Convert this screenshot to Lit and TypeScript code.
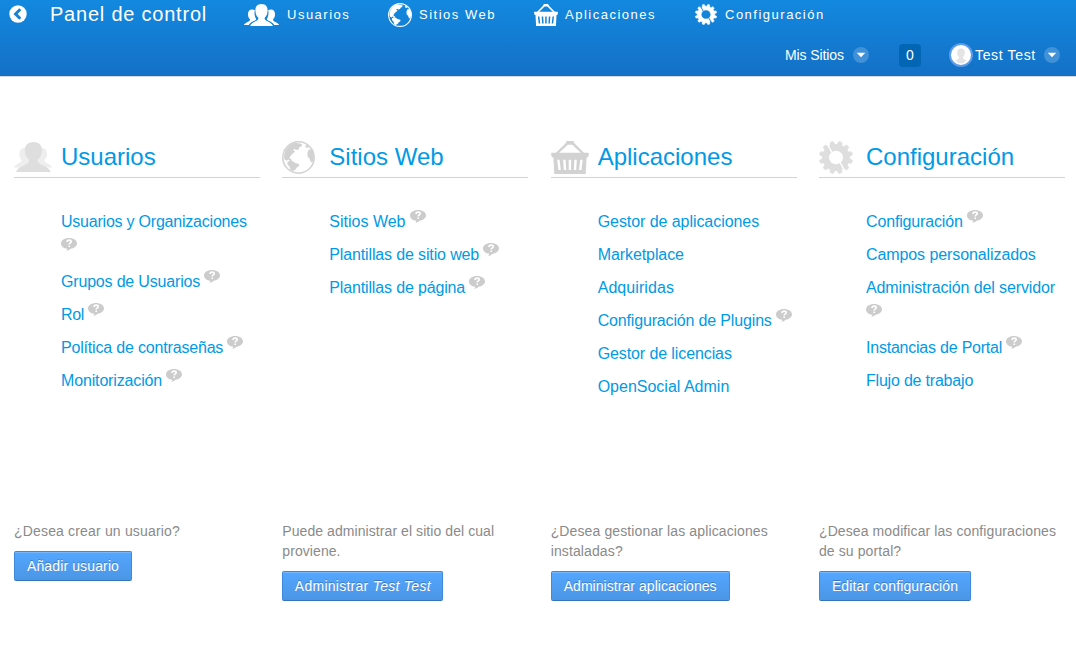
import { LitElement, html, svg, css, nothing } from "lit";
import { customElement, property } from "lit/decorators.js";
import { classMap } from "lit/directives/class-map.js";

type IconName = "users" | "globe" | "basket" | "gear";

function gearPath(cx: number, cy: number, outer: number, inner: number, teeth: number): string {
  const pts: string[] = [];
  const step = (Math.PI * 2) / teeth;
  for (let i = 0; i < teeth; i++) {
    const a = (i + 0.5) * step - Math.PI / 2;
    for (const [f, r] of [[-0.34, inner], [-0.17, outer], [0.17, outer], [0.34, inner]]) {
      pts.push(`${(cx + Math.cos(a + step * f) * r).toFixed(2)} ${(cy + Math.sin(a + step * f) * r).toFixed(2)}`);
    }
  }
  return `M${pts.join("L")}Z`;
}

const GEAR = gearPath(16.5, 16.5, 16.1, 13, 12);

@customElement("panel-icon")
class PanelIcon extends LitElement {
  @property() name: IconName = "users";
  @property({ type: Boolean }) solid = false;

  static styles = css`
    :host { display: block; }
    svg { display: block; width: 100%; height: 100%; }
  `;

  private shape() {
    switch (this.name) {
      case "users":
        return this.solid
          ? svg`<g fill="currentColor">
              <path d="M8.200 5.600C5.300 5.600 4 7.500 4 10.200c0 2.300.7 3.800 1.900 5 .3 1.300-.6 2-2.300 2.900C1.500 19.200.5 19.800 0 21h4.700c1.300-2.300 4-3.300 6.300-4.400.8-.5 1.200-1 1.200-1.600-1.100-1.500-1.600-3.800-1.700-6.200 0-1 .1-1.800.4-2.600-.7-.4-1.600-.6-2.700-.6Z"/>
              <path d="M26.800 5.600c2.900 0 4.200 1.900 4.200 4.600 0 2.300-.7 3.800-1.900 5-.3 1.300.6 2 2.300 2.900 2.100 1.100 3.100 1.700 3.600 2.900h-4.700c-1.300-2.300-4-3.300-6.300-4.400-.8-.5-1.200-1-1.200-1.600 1.100-1.500 1.600-3.800 1.700-6.200 0-1-.1-1.800-.4-2.600.7-.4 1.600-.6 2.700-.6Z"/>
              <path d="M17.500 0c-4.400 0-6.200 2.900-6.100 6.700.1 3.200 1.200 5.500 2.900 7 .3 1.600-.5 2.500-2.300 3.300C9.300 18.200 7.300 19.300 6 22h23c-1.300-2.700-3.300-3.800-6-5-1.800-.8-2.600-1.700-2.300-3.300 1.700-1.500 2.800-3.800 2.900-7C23.700 2.900 21.900 0 17.500 0Z"/>
            </g>`
          : svg`<g fill="currentColor">
              <path opacity=".5" d="M10.500 6C7 6 5.200 8.600 5.300 12c.1 2.800 1 4.300 2.200 5.500.3 1.800-1.700 3-3.700 4C2 22.500.8 23.200 0 25h37.500c-.8-1.800-2-2.500-3.800-3.500-2-1-4-2.200-3.700-4 1.200-1.200 2.500-2.700 2.600-5.500C32.700 8.600 31 6 27.500 6Z"/>
              <path d="M19.200 0c-6 0-8.700 3.600-8.500 8.500.1 4 1.800 7 4.200 8.800.4 2.300-.6 3.500-3 4.700C7 24.500 4 25.500 2 29.500h34.300c-2-4-5-5-9.900-7.500-2.400-1.200-3.400-2.400-3-4.700 2.400-1.800 4.100-4.800 4.200-8.800C27.800 3.600 25.200 0 19.200 0Z"/>
            </g>`;
      case "globe":
        return svg`
          <circle cx="12" cy="12" r="11.400" fill="none" stroke="currentColor" stroke-width="1.100"/>
          <path fill="currentColor" d="M1.500 12C1.500 7.500 4 3.600 7.600 1.800L9.500 1.200l2 .5 2 .1 1.200.9-.6 1.300-1.300.4-.8 1.700-1.700.4-1.200-.7-.9.8 1.400 1.200-1.800 1.300-2 2.200-.2 1.500 1.400.7.2 1.300-1.400-.3-1.200-1L3.300 14.400 1.900 13.500Z"/>
          <path fill="currentColor" d="M3.900 15.200l1.500-.7 2.600.3 1.300 1.100 3 .9.2 1.200-1.900 1.400-1 1.600-2 1L6.200 21.200l-.6-2.400-1.500-1.500Z"/>
          <path fill="currentColor" d="M18.500 8.200l1-2h2.400c.9 1.600 1.400 3.500 1.400 5.600l-.9 3.300-1.400.5-.8-2.500-1.600-1.800Z"/>
          <path fill="currentColor" d="M16.800 3.200l1.300-.2 1.600 1.200-.8.8-1.700-.5Z"/>`;
      case "basket":
        return svg`
          <path fill="none" stroke="currentColor" stroke-width="1.500" stroke-linejoin="round" d="M3.500 8.500L10 1.900 10.500 1h3l.5.9 6.500 6.600"/>
          <path fill="currentColor" d="M10 0h4l.9 1.500-.9 1h-4l-.9-1Z"/>
          <path fill="currentColor" fill-rule="evenodd" d="M.4 7.800h23.200l.4.500-.5 2.400-1 .3-.6 11H2.100l-.6-11-1-.3L0 8.300ZM3.900 12.500l.8 6.900h1.500l-.8-6.900ZM7.700 12.500l.4 6.900h1.500l-.4-6.900ZM11.200 12.500v6.900h1.500v-6.900ZM14.800 12.500l-.4 6.900h1.500l.4-6.900ZM18.500 12.500l-.8 6.900h1.500l.8-6.900Z"/>`;
      case "gear":
        return svg`
          <mask id="cut"><rect width="33" height="33" fill="#fff"/><circle cx="16.500" cy="16.500" r="6.800" fill="#000"/>
            <path stroke="#000" stroke-width="1.500" d="M12.500 11.500L7.800 2.500M20.500 21.500l4.700 9"/></mask>
          <path fill="currentColor" mask="url(#cut)" stroke="currentColor" stroke-width=".9" stroke-linejoin="round" d=${GEAR} />`;
    }
  }

  render() {
    const boxes: Record<IconName, string> = {
      users: this.solid ? "0 0 35 22" : "0 0 37.500 29.500",
      globe: "0 0 24 24",
      basket: "0 0 24 22",
      gear: "0 0 33 33",
    };
    return html`<svg viewBox=${boxes[this.name]} preserveAspectRatio="none" aria-hidden="true">${this.shape()}</svg>`;
  }
}

/* track is the letter spacing of a text, in pixels */
interface Entry { text: string; track: number; help?: boolean; wrap?: boolean }
interface Section {
  icon: IconName; title: string; entries: Entry[];
  hint: string[]; hintTrack: number;
  action: unknown; actionTrack: number; width: number;
}

const NAV: { icon: IconName; text: string }[] = [
  { icon: "users", text: "Usuarios" },
  { icon: "globe", text: "Sitios Web" },
  { icon: "basket", text: "Aplicaciones" },
  { icon: "gear", text: "Configuración" },
];

const SECTIONS: Section[] = [
  {
    icon: "users", title: "Usuarios", width: 118,
    entries: [
      { text: "Usuarios y Organizaciones", track: -0.22, help: true, wrap: true },
      { text: "Grupos de Usuarios", track: -0.18, help: true },
      { text: "Rol", track: -0.33, help: true },
      { text: "Política de contraseñas", track: -0.18, help: true },
      { text: "Monitorización", track: -0.15, help: true },
    ],
    hint: ["¿Desea crear un usuario?"], hintTrack: 0.17,
    action: "Añadir usuario", actionTrack: 0.13,
  },
  {
    icon: "globe", title: "Sitios Web", width: 161,
    entries: [
      { text: "Sitios Web", track: 0, help: true },
      { text: "Plantillas de sitio web", track: -0.14, help: true },
      { text: "Plantillas de página", track: -0.15, help: true },
    ],
    hint: ["Puede administrar el sitio del cual", "proviene."], hintTrack: 0.07,
    action: html`Administrar <em>Test Test</em>`, actionTrack: 0.26,
  },
  {
    icon: "basket", title: "Aplicaciones", width: 179,
    entries: [
      { text: "Gestor de aplicaciones", track: -0.06 },
      { text: "Marketplace", track: -0.08 },
      { text: "Adquiridas", track: 0.07 },
      { text: "Configuración de Plugins", track: -0.16, help: true },
      { text: "Gestor de licencias", track: -0.1 },
      { text: "OpenSocial Admin", track: 0 },
    ],
    hint: ["¿Desea gestionar las aplicaciones", "instaladas?"], hintTrack: 0.12,
    action: "Administrar aplicaciones", actionTrack: 0.05,
  },
  {
    icon: "gear", title: "Configuración", width: 152,
    entries: [
      { text: "Configuración", track: -0.15, help: true },
      { text: "Campos personalizados", track: -0.09 },
      { text: "Administración del servidor", track: -0.11, help: true, wrap: true },
      { text: "Instancias de Portal", track: -0.22, help: true },
      { text: "Flujo de trabajo", track: -0.2 },
    ],
    hint: ["¿Desea modificar las configuraciones", "de su portal?"], hintTrack: 0.1,
    action: "Editar configuración", actionTrack: 0.12,
  },
];

@customElement("app-root")
class AppRoot extends LitElement {
  static styles = css`
    :host { display: block; height: 662px; overflow: hidden; background: #fff; font-family: "Liberation Sans", Arial, sans-serif; }
    * { box-sizing: border-box; }
    .bar { height: 77px; background: linear-gradient(#1289df, #1470c6); border-bottom: 1px solid #d5d9dd; color: #fff; }
    .top { display: grid; grid-template-columns: 41px 194px 144px 146px 161px auto; height: 29px; padding-left: 9px; align-items: center; }
    .back { display: block; width: 18px; height: 18px; margin-bottom: 1px; }
    .title { margin: 0 0 1px; font-size: 20px; font-weight: 400; letter-spacing: .78px; line-height: 28px; white-space: nowrap; }
    .nav { display: flex; align-items: center; font-size: 13px; letter-spacing: 1.500px; line-height: 28px; white-space: nowrap; }
    .nav .users { width: 35px; height: 22px; margin-right: 8px; }
    .nav .globe { width: 24px; height: 24px; margin-right: 7px; }
    .nav .basket { width: 24px; height: 22px; margin-right: 7px; }
    .nav .gear { width: 22px; height: 21px; margin-right: 8px; }
    .dock { display: grid; grid-template-columns: 68px 46px 50px 26px 69px 16px; margin: 14px 0 0 785px; height: 24px; align-items: center; font-size: 14px; white-space: nowrap; }
    .sites { letter-spacing: -.1px; }
    .person { letter-spacing: .65px; }
    .caret { display: block; width: 16px; height: 16px; }
    .count { width: 22px; height: 23px; line-height: 23px; border-radius: 4px; background: #0366b5; text-align: center; }
    .avatar { display: block; width: 24px; height: 24px; }
    .grid { display: grid; grid-template-columns: repeat(4, 246px); column-gap: 22.340px; padding: 61px 0 0 14px; }
    .head { display: flex; align-items: flex-end; height: 40px; border-bottom: 1px solid #d3d3d3; }
    .mark { width: 47px; height: 39px; display: flex; align-items: flex-end; color: #d2d2d2; }
    .mark .users { width: 38px; height: 30px; margin-bottom: 5px; color: #dedede; }
    .mark .globe { width: 33px; height: 33px; margin-bottom: 3px; }
    .mark .basket { width: 38px; height: 33px; margin-bottom: 3px; }
    .mark .gear { width: 34px; height: 33px; margin-bottom: 3px; color: #dedede; }
    .head h2 { margin: 0; font-size: 24px; font-weight: 400; line-height: 40px; color: #009ae5; white-space: nowrap; }
    .list { list-style: none; margin: 0; padding: 27px 0 0 47px; height: 343px; color: #009ae5; font-size: 16px; line-height: 33px; white-space: nowrap; }
    .row { display: flex; align-items: flex-start; height: 33px; }
    .row.wrap { display: block; height: 60px; }
    .help { display: block; width: 16px; height: 13px; margin: 5px 0 0 4px; flex: none; }
    .wrap .help { margin: 0; }
    .hint { margin: 0; color: #8a8a8a; font-size: 14px; line-height: 20px; white-space: nowrap; }
    .line { display: block; }
    .button { display: block; margin: 10px 0 0; padding: 0; height: 30px; font: 14px "Liberation Sans", Arial, sans-serif; color: #fff; text-shadow: 0 -1px 0 rgba(0, 0, 0, .25); white-space: nowrap; background: linear-gradient(#54a6ff, #4b96e6); border: 1px solid #3f89d9; border-bottom-color: #3474b8; border-radius: 2px; box-shadow: inset 0 1px 0 rgba(255, 255, 255, .2); }
  `;

  private caret() {
    return html`<svg class="caret" viewBox="0 0 16 16"><circle cx="8" cy="8" r="8" fill="#4091d7"/><path d="M3.700 5.800h8.600L8 10.300Z" fill="#fff"/></svg>`;
  }

  private help() {
    return html`<svg class="help" viewBox="0 0 16 13">
      <path fill="#ccc" d="M8 0c4.500 0 8 2.400 8 5.400 0 2.600-2.700 4.500-6 5.200C8.800 11.800 7.500 12.700 5 13c1-.8 1.300-1.500 1.200-2.300C2.700 10.300 0 8.200 0 5.400 0 2.400 3.500 0 8 0Z"/>
      <path fill="none" stroke="#fff" stroke-width="1.600" d="M6 4c0-1.300.9-1.900 2.100-1.900 1.200 0 2.100.6 2.100 1.600C10.200 5 8.200 4.900 8.200 6.500M8.200 7.500v1.600"/></svg>`;
  }

  render() {
    return html`
      <header class="bar">
        <div class="top">
          <svg class="back" viewBox="0 0 18 18"><circle cx="9" cy="9" r="8.700" fill="#fff"/><path d="M11.300 4.200L6.500 8.900l4.800 4.800" fill="none" stroke="#1580d5" stroke-width="2.900"/></svg>
          <h1 class="title">Panel de control</h1>
          ${NAV.map((n) => html`<a class="nav"><panel-icon class=${n.icon} name=${n.icon} solid></panel-icon><span>${n.text}</span></a>`)}
        </div>
        <div class="dock">
          <span class="sites">Mis Sitios</span>${this.caret()}
          <span class="count">0</span>
          <svg class="avatar" viewBox="0 0 24 24"><circle cx="12" cy="12" r="11" fill="#fff" stroke="#5e9ce8" stroke-width="2"/><path fill="#e4e4e4" d="M12 5.500c-2.700 0-4 1.700-3.900 4.200.1 2 .9 3.300 1.900 4.200.2 1.600-1 2-3.300 3.100 1.400 2.400 3 3.600 5.300 3.600s3.900-1.200 5.300-3.600c-2.300-1.100-3.500-1.500-3.300-3.100 1-.9 1.800-2.200 1.900-4.200.1-2.500-1.200-4.200-3.900-4.200Z"/></svg>
          <span class="person">Test Test</span>${this.caret()}
        </div>
      </header>
      <main class="grid">
        ${SECTIONS.map((s) => html`
          <section>
            <div class="head"><div class="mark"><panel-icon class=${s.icon} name=${s.icon}></panel-icon></div><h2>${s.title}</h2></div>
            <ul class="list">
              ${s.entries.map((e) => html`<li class=${classMap({ row: true, wrap: !!e.wrap })}><a style="letter-spacing:${e.track}px">${e.text}</a>${e.help ? this.help() : nothing}</li>`)}
            </ul>
            <p class="hint" style="letter-spacing:${s.hintTrack}px">${s.hint.map((h) => html`<span class="line">${h}</span>`)}</p>
            <button class="button" style="width:${s.width}px;letter-spacing:${s.actionTrack}px">${s.action}</button>
          </section>`)}
      </main>`;
  }
}
